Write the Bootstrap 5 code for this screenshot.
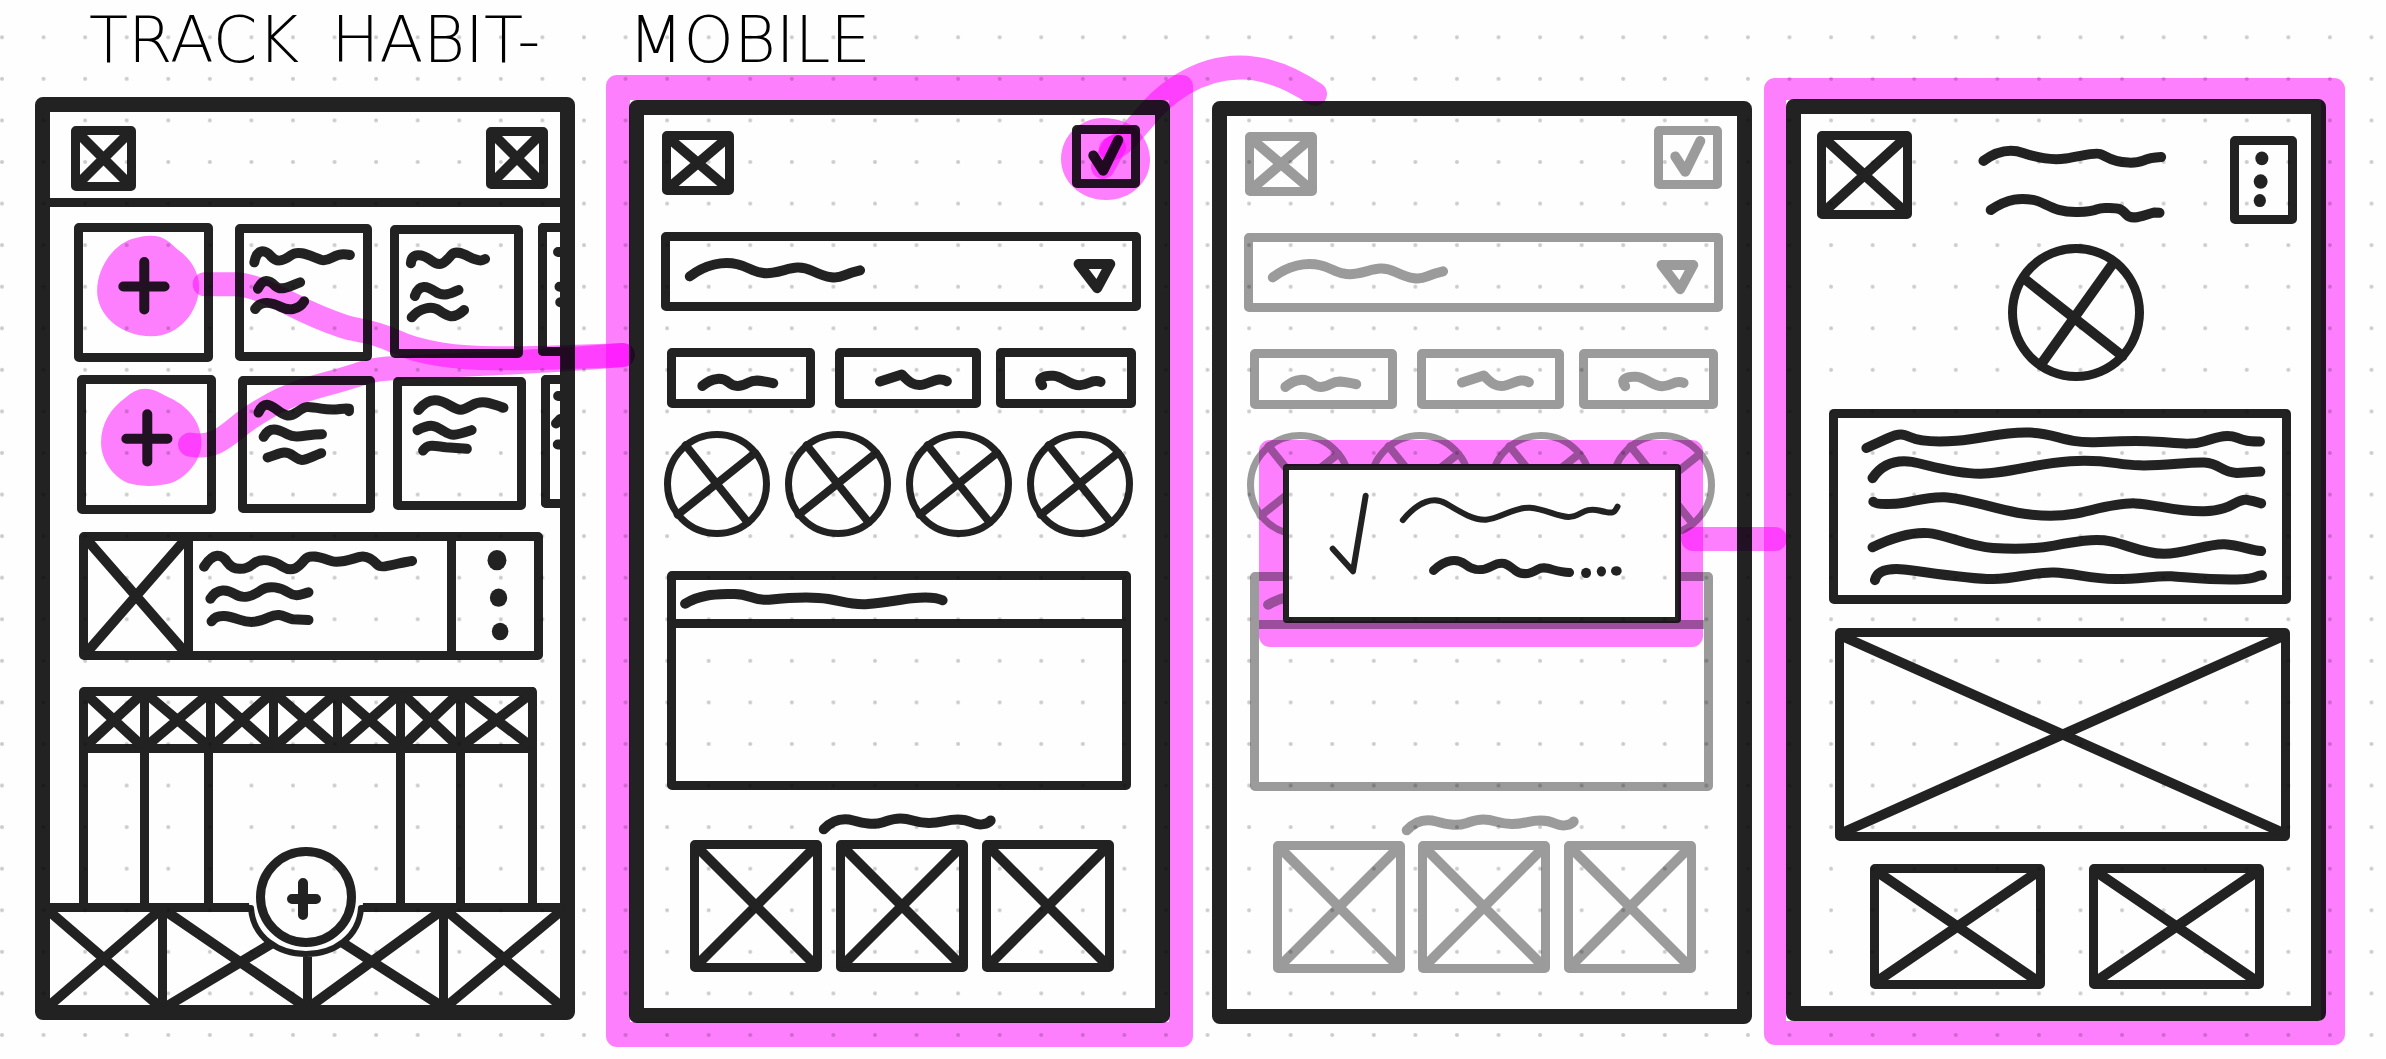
<!DOCTYPE html>
<html lang="en">
<head>
<meta charset="utf-8">
<meta name="viewport" content="width=device-width, initial-scale=1">
<title>Track Habit - Mobile</title>
<link rel="stylesheet" href="https://cdn.jsdelivr.net/npm/bootstrap@5.3.0/dist/css/bootstrap.min.css">
<style>
  body { background: #fefefe; color: #222; overflow-x: hidden; }
  button { color: inherit; background: none; padding: 0; }
  .board { min-height: 1059px; padding: 0 60px 0 35px; }
  .board-title { height: 97px; margin: 0; padding: 10px 0 0 54px; font: 200 64px/60px "DejaVu Sans Light", "DejaVu Sans", sans-serif; color: #000; }
  .word-a { margin-right: 32px; }
  .word-b { margin-right: 88px; }

  /* pen strokes */
  .ink { display: block; width: 100%; height: 100%; overflow: visible; fill: none; stroke: currentColor; stroke-width: 10px; stroke-linecap: round; stroke-linejoin: round; pointer-events: none; }
  .ink path, symbol path { vector-effect: non-scaling-stroke; }
  .ink ellipse { fill: currentColor; stroke: none; }
  .thin { stroke-width: 8px; }
  .fine { stroke-width: 6px; }
  .bold { stroke-width: 9px; }
  .outlined { border: 9px solid currentColor; border-radius: 5px; }

  /* phones */
  .phone { flex: 1 1 0; min-width: 0; border: 15px solid #222; border-radius: 8px; }
  .phone-b { margin: 3px 0 0 54px; }
  .phone-c { margin: 4px 0 0 42px; }
  .phone-d { margin: 2px 0 0 34px; }
  .faded { color: #9b9b9b; }

  /* habit list */
  .bar-top { height: 95px; padding: 14px 12px 0 21px; border-bottom: 9px solid; }
  .icon-65 { width: 65px; height: 65px; }
  .icon-62 { width: 62px; height: 62px; margin-top: 1px; }
  .tiles { height: 139px; margin-top: 16px; padding-left: 24px; overflow: hidden; }
  .tiles-next { margin-top: 13px; padding-left: 27px; }
  .tile { flex: none; }
  .tile-l { width: 139px; height: 139px; margin-right: 22px; }
  .tile-m { width: 137px; height: 137px; margin: 1px 18px 0 0; }
  .tile-s { width: 133px; height: 133px; margin: 2px 15px 0 0; }
  .tile-cut { flex: 1 1 0; height: 133px; border-right: 0; border-radius: 5px 0 0 5px; }
  .entry { height: 128px; margin: 18px 17px 0 29px; }
  .entry-pic { width: 105px; border-right: 9px solid; }
  .entry-menu { width: 87px; border-left: 9px solid; }
  .week { margin: 27px 23px 0 29px; }
  .week-head, .week-body { display: grid; border-right: 9px solid; }
  .week-head { grid-template-columns: 61fr 66fr 63fr 64fr 64fr 60fr 72fr; height: 66px; border-top: 9px solid; border-bottom: 9px solid; border-radius: 5px 5px 0 0; }
  .week-body { grid-template-columns: 61fr 64fr 193fr 60fr 72fr; height: 150px; }
  .week-head > *, .week-body > * { border-left: 9px solid; min-width: 0; min-height: 0; }
  .tabs { height: 102px; border-top: 9px solid; }
  .tabs > button { border: 0; min-width: 0; }
  .tabs > button + button { border-left: 9px solid; }
  .fab-wrap { bottom: 48px; left: 50%; width: 114px; height: 110px; margin-left: -56px; }
  .fab { width: 100px; height: 100px; background: #fefefe; left: 7px; top: 0; }

  /* habit form */
  .bar-form { height: 80px; padding: 10px 15px 0 18px; }
  .form-x { width: 72px; height: 64px; margin-top: 6px; }
  .form-ok { width: 68px; height: 63px; }
  .pick { margin: 37px 14px 0 17px; }
  .pick select { height: 79px; color: inherit; background: none; border: 9px solid; border-radius: 5px; appearance: none; }
  .pick .ink { position: absolute; inset: 9px; width: calc(100% - 18px); height: 61px; }
  .chips { margin: 37px 19px 0 23px; }
  .chip { height: 60px; }
  .chip-1 { flex: 148 1 0; margin-right: 20px; }
  .chip-2 { flex: 146 1 0; margin-right: 15px; }
  .chip-3 { flex: 138 1 0; }
  .rounds { margin: 23px 22px 0 20px; }
  .round { width: 106px; height: 106px; border: 7px solid; }
  .note { height: 219px; margin: 34px 24px 0 23px; color: inherit; background: none; }
  .note-head { height: 48px; border-bottom: 9px solid; }
  .caption-line { width: 176px; height: 22px; margin: 22px 0 6px 175px; }
  .thumbs { padding: 0 41px 36px 46px; }
  .thumb { width: 132px; height: 132px; }
  .popup { left: 56px; top: 348px; width: 398px; height: 159px; border: 6px solid #222; border-radius: 4px; background: #fefefe; color: #222; }

  /* habit detail */
  .bar-detail { height: 111px; padding: 17px 14px 0 16px; }
  .detail-x { width: 95px; height: 88px; }
  .detail-lines { width: 187px; height: 74px; margin: 15px 0 0 4px; }
  .detail-menu { width: 67px; height: 88px; margin-top: 5px; }
  .avatar { width: 136px; height: 137px; margin: 19px 0 0 207px; border: 9px solid; }
  .copy { height: 195px; margin: 28px 20px 0 28px; }
  .photo { height: 213px; margin: 24px 21px 0 34px; }
  .pair { padding: 23px 47px 17px 69px; }
  .pair-pic { width: 175px; height: 125px; }

  /* marker layer */
  .marker { position: absolute; inset: 0; width: 100%; height: 100%; pointer-events: none; mix-blend-mode: multiply; }
  .marker .fill { fill: #ff80ff; mix-blend-mode: multiply; }
  .marker .line { fill: none; stroke: #ff80ff; stroke-width: 24px; stroke-linecap: round; stroke-linejoin: round; mix-blend-mode: multiply; vector-effect: non-scaling-stroke; }
</style>
<script src="https://cdn.jsdelivr.net/npm/bootstrap@5.3.0/dist/js/bootstrap.bundle.min.js"></script>
</head>
<body>

<svg width="0" height="0" class="position-absolute" aria-hidden="true">
  <symbol id="cross" viewBox="0 0 100 100" preserveAspectRatio="none" overflow="visible"><path d="M0 0L100 100M100 0L0 100"/></symbol>
  <symbol id="spokes" viewBox="181 1133 233 277" preserveAspectRatio="none" overflow="visible"><path d="M218 1155L375 1387M394 1178L198 1364"/></symbol>
  <symbol id="tick" viewBox="1217 222 126 136" preserveAspectRatio="none" overflow="visible"><path d="M1248 287L1273 333L1311 240"/></symbol>
  <symbol id="pick" viewBox="180 543 1165 181" preserveAspectRatio="none" overflow="visible"><path d="M230 648C270 612 315 602 350 612S400 645 440 637S500 610 540 632S600 655 620 645S640 635 660 630M1212 611H1292L1259 683Z"/></symbol>
  <symbol id="chip1" viewBox="196 891 330 125" preserveAspectRatio="none" overflow="visible"><path d="M263 977C290 950 315 952 330 967S360 980 380 967S420 965 443 969"/></symbol>
  <symbol id="chip2" viewBox="622 891 324 125" preserveAspectRatio="none" overflow="visible"><path d="M713 964L768 943C785 965 800 980 825 972S860 950 882 963"/></symbol>
  <symbol id="chip3" viewBox="1029 891 303 125" preserveAspectRatio="none" overflow="visible"><path d="M1122 975C1108 955 1125 945 1150 947S1190 975 1215 975S1245 955 1268 965"/></symbol>
  <symbol id="head" viewBox="195 122 1124 115" preserveAspectRatio="none" overflow="visible"><path d="M218 192C260 162 300 165 340 163S390 185 430 180S540 170 580 178S640 197 680 193S760 180 790 176S850 172 868 182"/></symbol>
  <symbol id="cap" viewBox="553 815 445 65" preserveAspectRatio="none" overflow="visible"><path d="M565 866C590 835 615 832 640 840S690 855 715 845S760 830 790 840S840 850 870 842S920 835 940 846S980 850 987 840"/></symbol>
</svg>

<main class="board position-relative">
  <h1 class="board-title d-flex"><span class="word-a">TRACK</span><span class="word-b">HABIT-</span><span>MOBILE</span></h1>

  <div class="d-flex align-items-start">

    <section class="phone" aria-label="Habit list">
      <header class="bar-top d-flex justify-content-between align-items-start">
        <button class="outlined icon-65" aria-label="Logo"><svg class="ink"><use href="#cross"/></svg></button>
        <button class="outlined icon-62" aria-label="Profile"><svg class="ink"><use href="#cross"/></svg></button>
      </header>
      <div class="tiles d-flex">
        <button class="tile tile-l outlined" aria-label="Add"><svg class="ink" viewBox="160 426 306 364" preserveAspectRatio="none"><path d="M315 516V659M262 590H366"/></svg></button>
        <div class="tile tile-m outlined"><svg class="ink" viewBox="567 430 299 357" preserveAspectRatio="none"><path d="M593 518C600 475 620 480 635 500S665 515 685 497S735 500 760 510S790 485 833 496M602 597C615 565 630 570 645 588S680 590 708 578M595 658C610 630 640 640 660 652S705 660 718 635"/></svg></div>
        <div class="tile tile-s outlined"><svg class="ink" viewBox="958 432 290 345" preserveAspectRatio="none"><path d="M988 520C990 488 1015 490 1040 512S1075 515 1090 495S1130 500 1150 508S1165 510 1175 507M998 618C1008 580 1030 588 1050 605S1090 610 1108 600M990 682C1010 655 1040 645 1060 662S1095 690 1122 660"/></svg></div>
        <div class="tile-cut outlined"><svg class="ink" viewBox="1332 423 36 345" preserveAspectRatio="none"><path d="M1362 483H1370M1366 587H1372M1368 634H1372"/></svg></div>
      </div>
      <div class="tiles tiles-next d-flex">
        <button class="tile tile-l outlined" aria-label="Add"><svg class="ink" viewBox="166 882 306 365" preserveAspectRatio="none"><path d="M321 973V1116M268 1047H372"/></svg></button>
        <div class="tile tile-m outlined"><svg class="ink" viewBox="573 887 300 358" preserveAspectRatio="none"><path d="M602 970C615 935 630 945 650 963S680 985 700 968S720 950 760 958S810 955 830 958L830 966M615 1043C630 1010 650 1020 675 1035S720 1035 762 1035M625 1105C655 1095 665 1080 690 1100S710 1115 760 1092"/></svg></div>
        <div class="tile tile-s outlined"><svg class="ink" viewBox="965 890 289 344" preserveAspectRatio="none"><path d="M1006 962C1035 920 1060 930 1085 948S1115 965 1140 948S1185 940 1220 955M1004 1022C1040 1000 1050 1010 1070 1025S1095 1040 1140 1022M1018 1083C1030 1062 1045 1069 1075 1073L1128 1078"/></svg></div>
        <div class="tile-cut outlined"><svg class="ink" viewBox="1339 880 29 344" preserveAspectRatio="none"><path d="M1362 916H1370M1356 998L1368 985M1361 1061H1369"/></svg></div>
      </div>
      <div class="entry outlined d-flex">
        <div class="entry-pic"><svg class="ink"><use href="#cross"/></svg></div>
        <div class="flex-fill"><svg class="ink" viewBox="438 92 643 326" preserveAspectRatio="none"><path d="M466 168C490 125 510 130 525 155S570 180 590 160S640 150 665 168S705 170 720 148S770 145 790 152S840 145 860 139S895 150 905 163S960 155 992 151M482 263C500 230 525 235 545 250S590 255 610 238S660 230 680 245S710 250 730 244M485 330C500 305 530 315 555 325S600 335 630 318S670 320 690 324L730 326"/></svg></div>
        <button class="entry-menu border-top-0 border-end-0 border-bottom-0" aria-label="More"><svg class="ink" viewBox="1104 92 198 326" preserveAspectRatio="none"><ellipse cx="1208" cy="149" rx="24" ry="30"/><ellipse cx="1212" cy="260" rx="22" ry="27"/><ellipse cx="1216" cy="360" rx="21" ry="26"/></svg></button>
      </div>
      <div class="week">
        <div class="week-head">
          <div><svg class="ink"><use href="#cross"/></svg></div>
          <div><svg class="ink"><use href="#cross"/></svg></div>
          <div><svg class="ink"><use href="#cross"/></svg></div>
          <div><svg class="ink"><use href="#cross"/></svg></div>
          <div><svg class="ink"><use href="#cross"/></svg></div>
          <div><svg class="ink"><use href="#cross"/></svg></div>
          <div><svg class="ink"><use href="#cross"/></svg></div>
        </div>
        <div class="week-body"><div></div><div></div><div></div><div></div><div></div></div>
      </div>
      <nav class="tabs d-flex position-relative">
        <button style="flex:108 1 0" aria-label="Home"><svg class="ink"><use href="#cross"/></svg></button>
        <button style="flex:136 1 0" aria-label="Stats"><svg class="ink" viewBox="373 1190 344 275" preserveAspectRatio="none"><path d="M373 1190L717 1465M378 1465L717 1228"/></svg></button>
        <button style="flex:128 1 0" aria-label="Goals"><svg class="ink" viewBox="741 1190 321 275" preserveAspectRatio="none"><path d="M741 1465L1062 1190M1062 1465L741 1223"/></svg></button>
        <button style="flex:112 1 0" aria-label="Settings"><svg class="ink"><use href="#cross"/></svg></button>
        <div class="fab-wrap position-absolute">
          <svg class="ink fine position-absolute" viewBox="0 0 114 110" aria-hidden="true"><path fill="#fefefe" stroke="none" d="M0 56H114C112 88 90 110 57 110S2 88 0 56Z"/><path d="M0 61H2C4 90 29 107 57 107S110 90 112 61H114"/></svg>
          <button class="fab outlined rounded-circle position-absolute" aria-label="New habit"><svg class="ink" viewBox="0 0 82 82"><path d="M38 27V59M27 43H51"/></svg></button>
        </div>
      </nav>
    </section>

    <section class="phone phone-b" aria-label="Habit form">
      <header class="bar-form d-flex justify-content-between align-items-start">
        <button class="outlined form-x" aria-label="Close"><svg class="ink"><use href="#cross"/></svg></button>
        <button class="outlined form-ok" aria-label="Save"><svg class="ink"><use href="#tick"/></svg></button>
      </header>
      <div class="pick position-relative">
        <select class="w-100 d-block" aria-label="Habit"><option></option></select>
        <svg class="ink"><use href="#pick"/></svg>
      </div>
      <div class="chips d-flex">
        <button class="chip chip-1 outlined" aria-label="Option 1"><svg class="ink"><use href="#chip1"/></svg></button>
        <button class="chip chip-2 outlined" aria-label="Option 2"><svg class="ink"><use href="#chip2"/></svg></button>
        <button class="chip chip-3 outlined" aria-label="Option 3"><svg class="ink"><use href="#chip3"/></svg></button>
      </div>
      <div class="rounds d-flex justify-content-between">
        <button class="round rounded-circle" aria-label="Icon 1"><svg class="ink thin"><use href="#spokes"/></svg></button>
        <button class="round rounded-circle" aria-label="Icon 2"><svg class="ink thin"><use href="#spokes"/></svg></button>
        <button class="round rounded-circle" aria-label="Icon 3"><svg class="ink thin"><use href="#spokes"/></svg></button>
        <button class="round rounded-circle" aria-label="Icon 4"><svg class="ink thin"><use href="#spokes"/></svg></button>
      </div>
      <div class="note card outlined"><div class="note-head"><svg class="ink"><use href="#head"/></svg></div></div>
      <div class="caption-line"><svg class="ink"><use href="#cap"/></svg></div>
      <div class="thumbs d-flex justify-content-between">
        <button class="thumb outlined" aria-label="Picture 1"><svg class="ink"><use href="#cross"/></svg></button>
        <button class="thumb outlined" aria-label="Picture 2"><svg class="ink"><use href="#cross"/></svg></button>
        <button class="thumb outlined" aria-label="Picture 3"><svg class="ink"><use href="#cross"/></svg></button>
      </div>
    </section>

    <section class="phone phone-c faded position-relative" aria-label="Habit saved">
      <header class="bar-form d-flex justify-content-between align-items-start">
        <button class="outlined form-x" aria-label="Close"><svg class="ink"><use href="#cross"/></svg></button>
        <button class="outlined form-ok" aria-label="Save"><svg class="ink"><use href="#tick"/></svg></button>
      </header>
      <div class="pick position-relative">
        <select class="w-100 d-block" aria-label="Habit"><option></option></select>
        <svg class="ink"><use href="#pick"/></svg>
      </div>
      <div class="chips d-flex">
        <button class="chip chip-1 outlined" aria-label="Option 1"><svg class="ink"><use href="#chip1"/></svg></button>
        <button class="chip chip-2 outlined" aria-label="Option 2"><svg class="ink"><use href="#chip2"/></svg></button>
        <button class="chip chip-3 outlined" aria-label="Option 3"><svg class="ink"><use href="#chip3"/></svg></button>
      </div>
      <div class="rounds d-flex justify-content-between">
        <button class="round rounded-circle" aria-label="Icon 1"><svg class="ink thin"><use href="#spokes"/></svg></button>
        <button class="round rounded-circle" aria-label="Icon 2"><svg class="ink thin"><use href="#spokes"/></svg></button>
        <button class="round rounded-circle" aria-label="Icon 3"><svg class="ink thin"><use href="#spokes"/></svg></button>
        <button class="round rounded-circle" aria-label="Icon 4"><svg class="ink thin"><use href="#spokes"/></svg></button>
      </div>
      <div class="note card outlined"><div class="note-head"><svg class="ink"><use href="#head"/></svg></div></div>
      <div class="caption-line"><svg class="ink"><use href="#cap"/></svg></div>
      <div class="thumbs d-flex justify-content-between">
        <button class="thumb outlined" aria-label="Picture 1"><svg class="ink"><use href="#cross"/></svg></button>
        <button class="thumb outlined" aria-label="Picture 2"><svg class="ink"><use href="#cross"/></svg></button>
        <button class="thumb outlined" aria-label="Picture 3"><svg class="ink"><use href="#cross"/></svg></button>
      </div>
      <div class="popup position-absolute" role="dialog" aria-label="Saved">
        <svg class="ink fine" viewBox="231 1088 1007 370" preserveAspectRatio="none"><path d="M345 1286L398 1343L431 1153"/><path d="M528 1214C570 1165 610 1155 640 1172S710 1215 745 1213S820 1180 860 1183S930 1205 960 1206S1000 1180 1040 1190S1080 1195 1088 1180"/><path class="bold" d="M608 1341C640 1312 670 1310 690 1325S730 1345 760 1330S800 1325 820 1340S860 1350 880 1338S920 1345 963 1346"/><ellipse cx="1006" cy="1347" rx="13" ry="13"/><ellipse cx="1046" cy="1343" rx="12" ry="13"/><ellipse cx="1085" cy="1342" rx="14" ry="12"/></svg>
      </div>
    </section>

    <section class="phone phone-d" aria-label="Habit detail">
      <header class="bar-detail d-flex justify-content-between align-items-start">
        <button class="outlined detail-x" aria-label="Close"><svg class="ink"><use href="#cross"/></svg></button>
        <div class="detail-lines"><svg class="ink" viewBox="566 222 462 214" preserveAspectRatio="none"><path d="M577 265C610 237 645 230 675 242S740 265 780 258S850 240 865 245S890 268 935 270S960 258 1016 254M595 407C640 372 670 372 700 378S750 415 810 413S850 400 880 401S915 400 930 420S975 420 1000 414L1012 415"/></svg></div>
        <button class="outlined detail-menu" aria-label="More"><svg class="ink" viewBox="1206 219 120 203" preserveAspectRatio="none"><ellipse cx="1262" cy="258" rx="16" ry="20"/><ellipse cx="1259" cy="325" rx="17" ry="21"/><ellipse cx="1257" cy="380" rx="15" ry="19"/></svg></button>
      </header>
      <div class="avatar rounded-circle"><svg class="ink" viewBox="657 533 292 343" preserveAspectRatio="none"><path d="M675 607L918 830M895 562L717 853"/></svg></div>
      <div class="copy outlined"><svg class="ink" viewBox="218 1013 1094 512" preserveAspectRatio="none"><path d="M288 1100L340 1072C370 1055 380 1060 395 1068S440 1085 510 1079S620 1052 690 1055S770 1085 850 1083S920 1078 980 1080S1080 1095 1120 1080S1180 1060 1200 1070S1230 1080 1257 1081M303 1187C330 1140 370 1135 400 1140S500 1175 570 1174S700 1145 790 1138S900 1148 960 1150S1080 1140 1120 1142S1160 1170 1200 1172L1258 1168M305 1255C310 1262 330 1262 360 1261S430 1240 480 1242S600 1275 660 1287S760 1298 800 1290S900 1258 950 1260S1050 1285 1120 1283S1200 1245 1225 1250S1250 1257 1260 1260M303 1387C350 1360 400 1343 440 1346S540 1385 600 1389S700 1393 750 1382S850 1360 890 1370S970 1405 1020 1406S1130 1375 1170 1378S1230 1395 1260 1398M309 1482C315 1450 350 1448 380 1451S540 1480 600 1479S700 1458 750 1460S840 1478 900 1479S1000 1468 1040 1471S1140 1482 1200 1480S1240 1470 1262 1468"/></svg></div>
      <div class="photo outlined"><svg class="ink"><use href="#cross"/></svg></div>
      <div class="pair d-flex justify-content-between">
        <div class="pair-pic outlined"><svg class="ink"><use href="#cross"/></svg></div>
        <div class="pair-pic outlined"><svg class="ink"><use href="#cross"/></svg></div>
      </div>
    </section>
  </div>

  <svg class="marker" viewBox="0 0 2386 1059" preserveAspectRatio="none" aria-hidden="true">
    <defs><pattern id="dots" width="41.57" height="41.57" patternUnits="userSpaceOnUse" x="-18.8" y="16.5"><circle cx="20.8" cy="20.8" r="2" fill="#ccc"/></pattern></defs>
    <rect width="2386" height="1059" fill="url(#dots)"/>
    <!-- screen frames and the popup halo -->
    <path class="fill" fill-rule="evenodd" d="M617 75H1182A11 11 0 0 1 1193 86V1036A11 11 0 0 1 1182 1047H617A11 11 0 0 1 606 1036V86A11 11 0 0 1 617 75ZM630 100V1022H1169V100Z"/>
    <path class="fill" fill-rule="evenodd" d="M1775 78H2334A11 11 0 0 1 2345 89V1034A11 11 0 0 1 2334 1045H1775A11 11 0 0 1 1764 1034V89A11 11 0 0 1 1775 78ZM1786 100V1021H2321V100Z"/>
    <path class="fill" fill-rule="evenodd" d="M1270 440H1692A11 11 0 0 1 1703 451V636A11 11 0 0 1 1692 647H1270A11 11 0 0 1 1259 636V451A11 11 0 0 1 1270 440ZM1284 466V621H1678V466Z"/>
    <!-- tapped controls -->
    <g transform="translate(20 90) scale(.3954 .3333)">
      <path class="fill" d="M330 437C365 437 378 456 400 480C430 505 453 545 453 590C453 660 405 739 332 739C255 739 195 675 195 603C195 530 240 455 295 443Q310 437 330 437Z"/>
      <path class="fill" d="M316 896C340 896 352 908 373 920C415 942 459 985 459 1060C459 1120 405 1184 360 1184Q315 1194 275 1180C235 1160 205 1110 205 1058C205 1000 230 955 265 925Q290 896 316 896Z"/>
      <path class="line" d="M467 583H545C590 585 640 615 690 645S790 698 820 710S890 720 950 755S1110 805 1200 805S1430 800 1525 795"/>
      <path class="line" d="M430 1064C500 1080 530 1025 580 985S680 910 780 880S870 838 960 833S1300 818 1525 795"/>
    </g>
    <path class="fill" d="M1103 118C1133 118 1150 138 1150 160C1150 182 1131 200 1106 200C1080 200 1061 181 1061 159C1061 136 1080 118 1103 118Z"/>
    <path class="line" d="M1111 149C1125 144 1132 131 1141 122C1154 106 1165 95 1183 84C1222 61 1265 60 1315 94"/>
    <path class="line" d="M1103 167L1114 147"/>
    <path class="line" d="M1693 539H1775"/>
  </svg>
</main>
</body>
</html>
